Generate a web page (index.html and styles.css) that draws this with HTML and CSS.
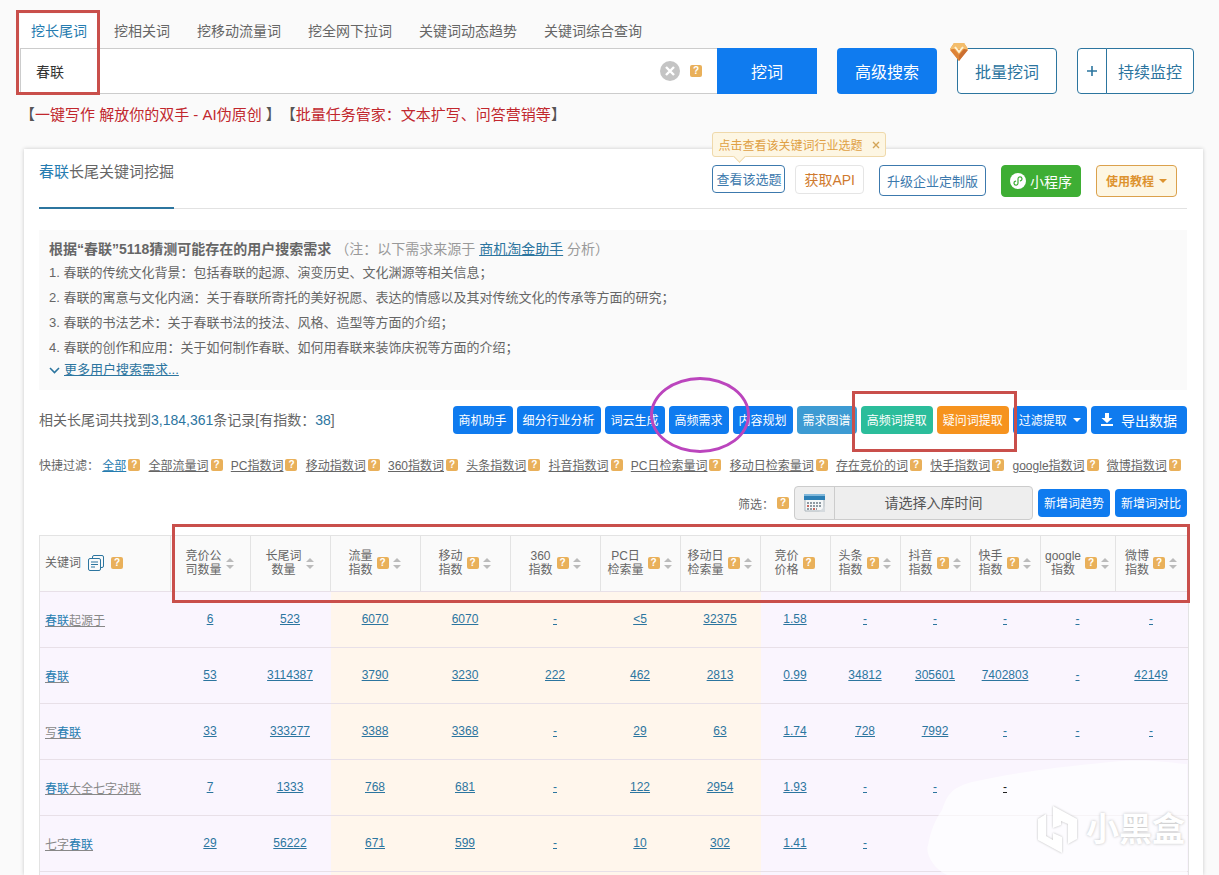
FILE: index.html
```html
<!DOCTYPE html>
<html lang="zh-CN">
<head>
  <meta charset="utf-8">
  <title>春联长尾关键词挖掘</title>
  <link rel="stylesheet" href="styles.css">
</head>
<body>
  <header class="search">
    <nav class="tabs">
      <a class="active" href="#">挖长尾词</a>
      <a href="#">挖相关词</a>
      <a href="#">挖移动流量词</a>
      <a href="#">挖全网下拉词</a>
      <a href="#">关键词动态趋势</a>
      <a href="#">关键词综合查询</a>
    </nav>
    <form class="search-row">
      <div class="search-box">
        <input type="text" value="春联" aria-label="关键词">
        <button type="button" class="clear" aria-label="清空">
          <svg width="20" height="20" viewBox="0 0 20 20"><circle cx="10" cy="10" r="10" fill="#c4c4c4"/><path d="M6 6l8 8M14 6l-8 8" stroke="#fff" stroke-width="2.4"/></svg>
        </button>
        <i class="help">?</i>
      </div>
      <button type="button" class="big-btn dig">挖词</button>
      <button type="button" class="big-btn advanced">高级搜索</button>
      <button type="button" class="big-btn outline batch">批量挖词
        <svg class="gem" width="18" height="18" viewBox="0 0 18 18"><path d="M4 0h10l4 6-9 12L0 6z" fill="#e99b45"/><path d="M4 0h10l4 6H0z" fill="#f3bd6c"/><path d="M0 7l9 11V12L4 6z" fill="#dd8236"/><path d="M18 7L9 18V12l5-6z" fill="#cb6f30"/><path d="M5 4l4 5 4-5" fill="none" stroke="#fff3d6" stroke-width="2"/></svg>
      </button>
      <div class="monitor">
        <button type="button" class="plus" aria-label="添加"><svg width="10" height="10" viewBox="0 0 10 10"><path d="M5 0v10M0 5h10" stroke="#2c759f" stroke-width="1.6"/></svg></button>
        <button type="button">持续监控</button>
      </div>
    </form>
    <span class="mark mark-search"></span>
  </header>

  <p class="notice">【<a href="#">一键写作 解放你的双手 - AI伪原创</a> 】【<a href="#">批量任务管家：文本扩写、问答营销等</a>】</p>

  <main class="panel">
    <div class="panel-head">
      <h1><em>春联</em>长尾关键词挖掘</h1>
      <div class="head-btns">
        <div class="topic">
          <button type="button">查看该选题</button>
          <div class="tip">点击查看该关键词行业选题
            <svg width="8" height="8" viewBox="0 0 8 8"><path d="M1 1l6 6M7 1L1 7" stroke="#d3a558" stroke-width="1.4"/></svg>
          </div>
        </div>
        <button type="button" class="api">获取API</button>
        <button type="button" class="custom">升级企业定制版</button>
        <button type="button" class="mini">
          <svg width="16" height="16" viewBox="0 0 16 16"><circle cx="8" cy="8" r="8" fill="#fff"/><path d="M5.6 8.2a2 2 0 1 0 2.4 2V5.8a2 2 0 1 1 2.4 2" fill="none" stroke="#3eae34" stroke-width="1.2" stroke-linecap="round"/></svg>
          小程序
        </button>
        <button type="button" class="guide">使用教程 <i class="caret"></i></button>
      </div>
    </div>

    <section class="needs">
      <h2>根据“春联”5118猜测可能存在的用户搜索需求 <small>（注：以下需求来源于 <a href="#">商机淘金助手</a> 分析）</small></h2>
      <p>1. 春联的传统文化背景：包括春联的起源、演变历史、文化渊源等相关信息；</p>
      <p>2. 春联的寓意与文化内涵：关于春联所寄托的美好祝愿、表达的情感以及其对传统文化的传承等方面的研究；</p>
      <p>3. 春联的书法艺术：关于春联书法的技法、风格、造型等方面的介绍；</p>
      <p>4. 春联的创作和应用：关于如何制作春联、如何用春联来装饰庆祝等方面的介绍；</p>
      <div class="more">
        <svg width="11" height="7" viewBox="0 0 11 7"><path d="M1 1l4.500 4.500L10 1" fill="none" stroke="#2c759f" stroke-width="1.6"/></svg>
        <a href="#">更多用户搜索需求...</a>
      </div>
    </section>

    <div class="result-bar">
      <div class="count">相关长尾词共找到<b>3,184,361</b>条记录[有指数：<b>38</b>]</div>
      <div class="tools">
        <button type="button">商机助手</button>
        <button type="button">细分行业分析</button>
        <button type="button">词云生成</button>
        <div class="circled"><button type="button">高频需求</button></div>
        <button type="button">内容规划</button>
        <button type="button" class="sky">需求图谱</button>
        <div class="boxed">
          <button type="button" class="teal">高频词提取</button>
          <button type="button" class="orange">疑问词提取</button>
        </div>
        <button type="button">过滤提取 <i class="caret"></i></button>
        <button type="button" class="export">
          <svg width="12" height="13" viewBox="0 0 12 13"><path d="M4 0h4v5h3.500L6 10 .5 5H4zM0 11h12v2H0z" fill="#fff"/></svg>
          导出数据
        </button>
      </div>
    </div>

    <div class="filters">
      <span class="label">快捷过滤：</span>
      <span><a class="active" href="#">全部</a><i class="help">?</i></span>
      <span><a href="#">全部流量词</a><i class="help">?</i></span>
      <span><a href="#">PC指数词</a><i class="help">?</i></span>
      <span><a href="#">移动指数词</a><i class="help">?</i></span>
      <span><a href="#">360指数词</a><i class="help">?</i></span>
      <span><a href="#">头条指数词</a><i class="help">?</i></span>
      <span><a href="#">抖音指数词</a><i class="help">?</i></span>
      <span><a href="#">PC日检索量词</a><i class="help">?</i></span>
      <span><a href="#">移动日检索量词</a><i class="help">?</i></span>
      <span><a href="#">存在竞价的词</a><i class="help">?</i></span>
      <span><a href="#">快手指数词</a><i class="help">?</i></span>
      <span><a href="#">google指数词</a><i class="help">?</i></span>
      <span><a href="#">微博指数词</a><i class="help">?</i></span>
    </div>

    <div class="date-row">
      <label for="date">筛选：</label>
      <i class="help">?</i>
      <div class="date-box">
        <span class="cal">
          <svg width="21" height="18" viewBox="0 0 21 18"><path d="M1 1h19v16H1z" fill="#f5f7f8" stroke="#a9b3ba"/><path d="M0 0h21v6H0z" fill="#2c7fb5"/><path d="M0 0h21v2H0z" fill="#7fb7da"/><path d="M3 9h15M3 12h15M3 15h10" stroke="#8e9aa3" stroke-width="2" stroke-dasharray="2 1"/><path d="M3 12h2M9 15h2" stroke="#c7685f" stroke-width="2"/><path d="M21 12v6h-6z" fill="#d5dade"/></svg>
        </span>
        <input id="date" type="text" placeholder="请选择入库时间" readonly>
      </div>
      <button type="button">新增词趋势</button>
      <button type="button">新增词对比</button>
    </div>

    <div class="table-wrap">
      <table>
        <colgroup>
          <col class="w131"><col class="w80"><col class="w80"><col class="w90"><col class="w90"><col class="w90"><col class="w80"><col class="w80"><col class="w70"><col class="w70"><col class="w70"><col class="w70"><col class="w75"><col class="w72">
        </colgroup>
        <thead>
          <tr>
            <th class="key"><div>关键词
              <svg width="16" height="16" viewBox="0 0 16 16" fill="none" stroke="#2c759f"><path d="M4.500 3V2q0-1.500 1.500-1.500h8q1.500 0 1.500 1.500v9q0 1.500-1.500 1.500h-1"/><rect x=".5" y="3.500" width="12" height="12" rx="1.500"/><path d="M3 7h7M3 9.500h7M3 12h4"/></svg>
              <i class="help">?</i></div></th>
            <th><div><span>竞价公<br>司数量</span><i class="sort"></i></div></th>
            <th><div><span>长尾词<br>数量</span><i class="sort"></i></div></th>
            <th><div><span>流量<br>指数</span><i class="help">?</i><i class="sort"></i></div></th>
            <th><div><span>移动<br>指数</span><i class="help">?</i><i class="sort"></i></div></th>
            <th><div><span>360<br>指数</span><i class="help">?</i><i class="sort"></i></div></th>
            <th><div><span>PC日<br>检索量</span><i class="help">?</i><i class="sort"></i></div></th>
            <th><div><span>移动日<br>检索量</span><i class="help">?</i><i class="sort"></i></div></th>
            <th><div><span>竞价<br>价格</span><i class="help">?</i></div></th>
            <th><div><span>头条<br>指数</span><i class="help">?</i><i class="sort"></i></div></th>
            <th><div><span>抖音<br>指数</span><i class="help">?</i><i class="sort"></i></div></th>
            <th><div><span>快手<br>指数</span><i class="help">?</i><i class="sort"></i></div></th>
            <th><div><span>google<br>指数</span><i class="help">?</i><i class="sort"></i></div></th>
            <th><div><span>微博<br>指数</span><i class="help">?</i><i class="sort"></i></div></th>
          </tr>
        </thead>
        <tbody>
          <tr>
            <td class="key"><a href="#"><em>春联</em>起源于</a></td>
            <td><a href="#">6</a></td>
            <td><a href="#">523</a></td>
            <td class="warm"><a href="#">6070</a></td>
            <td class="warm"><a href="#">6070</a></td>
            <td class="warm"><a href="#">-</a></td>
            <td class="warm"><a href="#">&lt;5</a></td>
            <td class="warm"><a href="#">32375</a></td>
            <td><a href="#">1.58</a></td>
            <td><a href="#">-</a></td>
            <td><a href="#">-</a></td>
            <td><a href="#">-</a></td>
            <td><a href="#">-</a></td>
            <td><a href="#">-</a></td>
          </tr>
          <tr>
            <td class="key"><a href="#"><em>春联</em></a></td>
            <td><a href="#">53</a></td>
            <td><a href="#">3114387</a></td>
            <td class="warm"><a href="#">3790</a></td>
            <td class="warm"><a href="#">3230</a></td>
            <td class="warm"><a href="#">222</a></td>
            <td class="warm"><a href="#">462</a></td>
            <td class="warm"><a href="#">2813</a></td>
            <td><a href="#">0.99</a></td>
            <td><a href="#">34812</a></td>
            <td><a href="#">305601</a></td>
            <td><a href="#">7402803</a></td>
            <td><a href="#">-</a></td>
            <td><a href="#">42149</a></td>
          </tr>
          <tr>
            <td class="key"><a href="#">写<em>春联</em></a></td>
            <td><a href="#">33</a></td>
            <td><a href="#">333277</a></td>
            <td class="warm"><a href="#">3388</a></td>
            <td class="warm"><a href="#">3368</a></td>
            <td class="warm"><a href="#">-</a></td>
            <td class="warm"><a href="#">29</a></td>
            <td class="warm"><a href="#">63</a></td>
            <td><a href="#">1.74</a></td>
            <td><a href="#">728</a></td>
            <td><a href="#">7992</a></td>
            <td><a href="#">-</a></td>
            <td><a href="#">-</a></td>
            <td><a href="#">-</a></td>
          </tr>
          <tr>
            <td class="key"><a href="#"><em>春联</em>大全七字对联</a></td>
            <td><a href="#">7</a></td>
            <td><a href="#">1333</a></td>
            <td class="warm"><a href="#">768</a></td>
            <td class="warm"><a href="#">681</a></td>
            <td class="warm"><a href="#">-</a></td>
            <td class="warm"><a href="#">122</a></td>
            <td class="warm"><a href="#">2954</a></td>
            <td><a href="#">1.93</a></td>
            <td><a href="#">-</a></td>
            <td><a href="#">-</a></td>
            <td><a class="dark" href="#">-</a></td>
            <td></td>
            <td></td>
          </tr>
          <tr>
            <td class="key"><a href="#">七字<em>春联</em></a></td>
            <td><a href="#">29</a></td>
            <td><a href="#">56222</a></td>
            <td class="warm"><a href="#">671</a></td>
            <td class="warm"><a href="#">599</a></td>
            <td class="warm"><a href="#">-</a></td>
            <td class="warm"><a href="#">10</a></td>
            <td class="warm"><a href="#">302</a></td>
            <td><a href="#">1.41</a></td>
            <td><a href="#">-</a></td>
            <td></td>
            <td></td>
            <td></td>
            <td></td>
          </tr>
          <tr class="last">
            <td colspan="3"></td>
            <td colspan="5" class="warm"></td>
            <td colspan="6"></td>
          </tr>
        </tbody>
      </table>
      <span class="mark mark-head"></span>
      <div class="watermark">
        <svg class="cloud" width="260" height="115" viewBox="0 0 260 115"><path d="M20 115C5 108-2 92 1 85 4 70 8 60 15 50 20 35 25 27 45 22 80 14 120 8 183 2 220-2 245 3 260 4V115z" fill="#fff" fill-opacity=".65"/></svg>
        <svg class="logo" width="40" height="48" viewBox="0 0 40 48" fill="#fff"><path d="M0 13l8-5v22l7 4v-7l9 4v16L0 34z"/><path d="M15 0l24 13v20l-9 5V18l-7-3v4l-8 3z"/></svg>
        <span>小黑盒</span>
      </div>
    </div>
  </main>
</body>
</html>
```

FILE: styles.css
```css
*, *::before, *::after {
  box-sizing: border-box;
}
body {
  margin: 0;
  background: #fafafa;
  color: #666;
  font-family: "Liberation Sans", "Noto Sans CJK SC", sans-serif;
  font-size: 12px;
}
h1, h2, p {
  margin: 0;
  font-weight: normal;
}
i, em {
  font-style: normal;
}
a {
  color: #2c759f;
}
em {
  color: #267cb0;
}
button, input {
  font-family: inherit;
  font-size: 12px;
}
button {
  padding: 0 6px 1px;
  border: 0;
  border-radius: 4px;
  background: #0f7bef;
  color: #fff;
  white-space: nowrap;
  cursor: pointer;
}
svg {
  display: block;
  flex: none;
}
.help {
  flex: none;
  display: inline-block;
  width: 12px;
  height: 12px;
  border-radius: 2px;
  background: #e9b05a;
  color: #fff;
  font-size: 10px;
  font-weight: bold;
  line-height: 12px;
  text-align: center;
}
.caret {
  display: inline-block;
  margin-left: 3px;
  border: 4px solid transparent;
  border-top-color: currentColor;
  border-bottom: 0;
  vertical-align: 3px;
}
/* hand-drawn highlight frames */
.mark {
  position: absolute;
  border: 3px solid #c94f4b;
  pointer-events: none;
}

/* search */
.search {
  position: relative;
  margin: 0 25px 0 20px;
  padding-top: 14px;
}
.tabs {
  display: flex;
  gap: 5px;
}
.tabs a {
  padding: 1px 11px 0;
  color: #666;
  font-size: 14px;
  line-height: 33px;
  text-decoration: none;
}
.tabs .active {
  background: #fff;
  color: #267cb0;
}
.search-row {
  display: flex;
  gap: 20px;
}
.search-box {
  display: flex;
  flex: 1;
  align-items: center;
  gap: 10px;
  height: 46px;
  padding-right: 15px;
  border: 1px solid #ccc;
  border-right: 0;
  background: #fff;
}
.search-box input {
  flex: 1;
  height: 44px;
  padding: 0 15px;
  border: 0;
  outline: 0;
  background: none;
  color: #333;
  font-size: 14px;
}
.search-box .clear {
  padding: 0;
  background: none;
}
.big-btn {
  width: 100px;
  height: 46px;
  font-size: 16px;
}
.dig {
  margin-left: -20px;
  border-radius: 0;
}
.outline, .monitor button {
  border: 1px solid #2c759f;
  background: #fff;
  color: #2c759f;
}
.batch {
  position: relative;
}
.gem {
  position: absolute;
  top: -6px;
  left: -8px;
}
.monitor {
  display: flex;
}
.monitor button {
  width: 88px;
  border-radius: 0 4px 4px 0;
  font-size: 16px;
}
.monitor .plus {
  width: 30px;
  margin-right: -1px;
  padding: 0 9px;
  border-radius: 4px 0 0 4px;
}
.mark-search {
  top: 10px;
  left: -4px;
  width: 84px;
  height: 85px;
}
.notice {
  padding-left: 20px;
  color: #555;
  font-size: 15px;
  line-height: 42px;
  text-spacing-trim: space-all;
}
.notice a {
  color: #c1272d;
  text-decoration: none;
}

/* panel */
.panel {
  margin: 13px 16px 0 24px;
  padding: 0 16px 0 15px;
  background: #fff;
  box-shadow: 0 0 4px rgba(0, 0, 0, 0.2);
}
.panel-head {
  display: flex;
  justify-content: space-between;
  height: 60px;
  border-bottom: 1px solid #e2e2e2;
}
.panel-head h1 {
  height: 60px;
  border-bottom: 2px solid #2c759f;
  font-size: 15px;
  line-height: 46px;
}
.head-btns {
  display: flex;
  align-items: flex-start;
  gap: 15px;
  padding: 16px 10px 0 0;
}
.head-btns button {
  display: flex;
  align-items: center;
  justify-content: center;
  height: 32px;
  border: 1px solid #3c79ad;
  background: #fff;
  color: #3c79ad;
  font-size: 13px;
}
.topic {
  position: relative;
  margin-right: -5px;
}
.head-btns .topic button {
  height: 28px;
  padding: 0 3px 2px;
}
.tip {
  position: absolute;
  bottom: 36px;
  left: 0;
  display: flex;
  align-items: center;
  gap: 10px;
  height: 25px;
  padding: 0 5px;
  border: 1px solid #efd9ab;
  border-radius: 3px;
  background: #fdf6e3;
  color: #dfa044;
  white-space: nowrap;
}
.tip::after {
  content: "";
  position: absolute;
  bottom: -5px;
  left: 22px;
  width: 9px;
  height: 9px;
  border: solid #efd9ab;
  border-width: 0 1px 1px 0;
  background: #fdf6e3;
  transform: rotate(45deg);
}
.head-btns .api {
  height: 29px;
  padding: 0 8px 1px;
  border-color: #e5e5e5;
  color: #cf7a2e;
  font-size: 14px;
}
.head-btns .custom {
  height: 31px;
  padding: 0 7px 1px;
}
.head-btns .mini {
  gap: 4px;
  padding: 0 8px;
  border-color: #3eae34;
  background: #3eae34;
  color: #fff;
  font-size: 14px;
}
.head-btns .guide {
  gap: 2px;
  padding: 0 9px 1px;
  border-color: #dba14c;
  background: #fdf6e3;
  color: #dd9330;
  font-size: 12px;
  font-weight: bold;
}
.needs {
  margin-top: 21px;
  padding: 9px 10px 10px;
  background: #fafafa;
  font-size: 13px;
  line-height: 25px;
}
.needs h2 {
  font-size: 14px;
  font-weight: bold;
  line-height: 21px;
}
.needs small {
  color: #999;
  font-size: 14px;
  font-weight: normal;
}
.more {
  display: flex;
  align-items: center;
  gap: 4px;
  line-height: 20px;
}

/* result toolbar */
.result-bar {
  display: flex;
  justify-content: space-between;
  margin-top: 16px;
}
.count {
  font-size: 14px;
  line-height: 28px;
}
.count b {
  color: #2c759f;
  font-weight: normal;
}
.tools, .boxed {
  display: flex;
  gap: 4px;
}
.tools button, .date-row button {
  height: 28px;
}
.circled, .boxed {
  position: relative;
}
.circled::after {
  content: "";
  position: absolute;
  z-index: 1;
  top: -29px;
  left: -19px;
  width: 100px;
  height: 76px;
  border: 3px solid #bb45bd;
  border-radius: 50%;
  pointer-events: none;
}
.boxed::after {
  content: "";
  position: absolute;
  z-index: 1;
  inset: -15px -8px -18px -9px;
  border: 3px solid #c94f4b;
  pointer-events: none;
}
.tools .sky {
  background: #3d9bd3;
}
.tools .teal {
  background: #2bbd9b;
}
.tools .orange {
  background: #f6931e;
}
.tools .export {
  display: flex;
  align-items: center;
  gap: 8px;
  padding: 0 10px 1px;
  font-size: 14px;
}

/* filters */
.filters {
  display: flex;
  justify-content: space-between;
  margin-top: 22px;
  padding-right: 6px;
  line-height: 20px;
  white-space: nowrap;
}
.filters span {
  display: flex;
  gap: 2px;
}
.filters .help {
  margin-top: 3px;
}
.filters .label {
  margin-right: -5px;
}
.filters a {
  color: #666;
}
.filters .active {
  color: #267cb0;
}
.date-row {
  display: flex;
  align-items: center;
  justify-content: flex-end;
  gap: 5px;
  margin-top: 10px;
}
.date-row label {
  margin-right: -2px;
}
.date-box {
  display: flex;
  width: 239px;
  height: 34px;
  border: 1px solid #ccc;
  border-radius: 4px;
  background: #eee;
}
.cal {
  display: flex;
  align-items: center;
  padding: 0 9px;
  border-right: 1px solid #ccc;
}
.date-box input {
  width: 100%;
  border: 0;
  background: none;
  font-size: 14px;
  text-align: center;
}
.date-box input::placeholder {
  color: #555;
}

/* table */
.table-wrap {
  position: relative;
  margin-top: 15px;
}
table {
  width: 100%;
  table-layout: fixed;
  border-collapse: separate;
  border-spacing: 0;
  border: solid #e3e3e3;
  border-width: 1px 1px 0;
}
.w131 { width: 131px; }
.w90 { width: 90px; }
.w80 { width: 80px; }
.w75 { width: 75px; }
.w72 { width: 72px; }
.w70 { width: 70px; }
th, td {
  height: 56px;
  padding: 0 2px 1px 0;
  border-bottom: 1px solid #e8e0e8;
  text-align: center;
}
th {
  border-right: 1px solid #e3e3e3;
  background: #fafafa;
  font-weight: normal;
  line-height: 14px;
}
th:last-child {
  border-right: 0;
}
th div {
  display: flex;
  align-items: center;
  justify-content: center;
  gap: 4px;
}
th.key div {
  justify-content: flex-start;
  gap: 7px;
}
th.key, td.key {
  padding-left: 5px;
  text-align: left;
}
.sort {
  display: flex;
  flex-direction: column;
  gap: 3px;
}
.sort::before, .sort::after {
  content: "";
  border: 4px solid transparent;
}
.sort::before {
  border-top: 0;
  border-bottom-color: #bbb;
}
.sort::after {
  border-bottom: 0;
  border-top-color: #bbb;
}
td {
  background: #faf5fe;
}
td.warm {
  background: #fff6ec;
}
td.key a {
  color: #888;
}
td .dark {
  position: relative;
  z-index: 2;
  color: #222;
}
.last td {
  height: 3px;
  border-bottom: 0;
}
.mark-head {
  top: -11px;
  right: -3px;
  left: 133px;
  height: 79px;
}
.watermark {
  position: absolute;
  right: 0;
  bottom: 0;
  display: flex;
  align-items: center;
  gap: 8px;
  padding: 0 2px 20px 0;
  color: #fff;
  font-size: 33px;
  font-weight: bold;
  line-height: 50px;
  text-shadow: 0 0 3px #bbb;
}
.cloud {
  position: absolute;
  right: 0;
  bottom: 0;
}
.logo {
  position: relative;
  filter: drop-shadow(0 0 1px #bbb);
}
.watermark span {
  position: relative;
}
```
